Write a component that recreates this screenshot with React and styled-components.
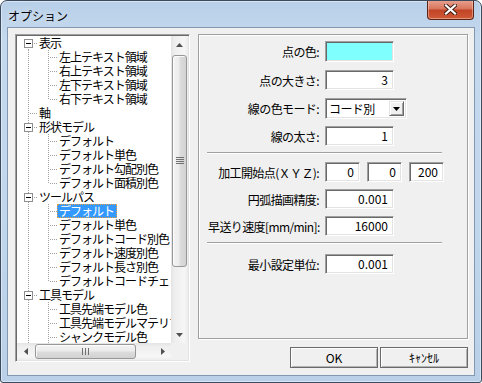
import React from 'react'
import styled, { createGlobalStyle } from 'styled-components'

const FONT = `"Noto Sans CJK JP", "Noto Sans", sans-serif`

const GlobalStyle = createGlobalStyle`
  html, body {
    margin: 0;
    padding: 0;
    background: #ffffff;
  }
  body {
    font-family: ${FONT};
  }
`

const Window = styled.div`
  width: 482px;
  height: 383px;
  box-sizing: border-box;
  border: 1px solid #3b4a5c;
  border-radius: 7px 7px 3px 3px;
  background: linear-gradient(180deg, #b7cfe8 0%, #c5d9ee 10%, #c0d6ec 60%, #b9d0e8 100%);
  box-shadow: inset 0 0 0 1px rgba(255, 255, 255, 0.45);
  display: flex;
  flex-direction: column;
  padding: 0 6px 6px 6px;
  overflow: hidden;
`

const TitleBar = styled.div`
  height: 28px;
  display: flex;
  align-items: center;
  padding-left: 1px;
`

const Title = styled.div`
  font-size: 12px;
  color: #000;
  margin-top: 2px;
  text-shadow: 0 0 6px rgba(255, 255, 255, 0.9);
`

const CloseButton = styled.div`
  align-self: flex-start;
  margin: -1px 1px 0 auto;
  width: 47px;
  height: 20px;
  box-sizing: border-box;
  border: 1px solid #5c2419;
  border-top: none;
  border-radius: 0 0 4px 4px;
  background: linear-gradient(180deg, #e8a493 0%, #d9765e 45%, #c24426 55%, #cf5a36 100%);
  box-shadow: inset 0 0 0 1px rgba(255, 220, 200, 0.45);
  display: flex;
  align-items: center;
  justify-content: center;
`

const Client = styled.div`
  flex: 1;
  border: 1px solid #8398b2;
  background: #f0f0f0;
  display: flex;
  gap: 8px;
  padding: 6px 7px 7px 7px;
`

/* ---------- tree ---------- */

const TreeBox = styled.div`
  width: 175px;
  height: 328px;
  box-sizing: border-box;
  border: 1px solid;
  border-color: #a0a0a0 #ffffff #ffffff #a0a0a0;
  box-shadow: inset 1px 1px #696969, inset -1px -1px #e3e3e3;
  padding: 1px;
  display: grid;
  grid-template-columns: 1fr 17px;
  grid-template-rows: 1fr 17px;
  flex: none;
`

const TreeView = styled.div`
  background: #ffffff;
  overflow: hidden;
`

const TreeRow = styled.div`
  height: 14px;
  display: flex;
  align-items: center;
  white-space: nowrap;
`

const NodeLabel = styled.span`
  display: inline-block;
  font-size: 12px;
  letter-spacing: -1px;
  line-height: 12px;
  padding: 0 2px 0 1px;
  height: 12px;
  border: 1px dotted ${p => (p.$selected ? '#e8a040' : 'transparent')};
  background: ${p => (p.$selected ? '#3399ff' : 'transparent')};
  color: ${p => (p.$selected ? '#ffffff' : '#000000')};
`

const LINE = '#a0a0a0'

const Dotted = props => <line stroke={LINE} strokeDasharray="1 1" {...props} />

const Guide = ({ on }) => (
  <svg width="20" height="14" shapeRendering="crispEdges" style={{ flex: 'none', display: 'block' }}>
    {on && <Dotted x1="11.5" y1="0" x2="11.5" y2="14" />}
  </svg>
)

const Connector = ({ first, last, expandable }) => (
  <svg width="20" height="14" shapeRendering="crispEdges" style={{ flex: 'none', display: 'block' }}>
    <Dotted x1="11.5" y1={first ? 7 : 0} x2="11.5" y2={last ? 8 : 14} />
    <Dotted x1="13" y1="7.5" x2="20" y2="7.5" />
    {expandable && (
      <>
        <rect x="7.5" y="3.5" width="8" height="8" fill="#ffffff" stroke="#8f8f8f" />
        <line x1="9" y1="7.5" x2="14" y2="7.5" stroke="#000000" />
      </>
    )}
  </svg>
)

const ScrollV = styled.div`
  display: flex;
  flex-direction: column;
  background: linear-gradient(90deg, #e4e4e4 0%, #eeeeee 20%, #f6f6f6 80%, #ececec 100%);
`

const ScrollH = styled.div`
  display: flex;
  background: linear-gradient(180deg, #e4e4e4 0%, #eeeeee 20%, #f6f6f6 80%, #ececec 100%);
`

const ArrowCell = styled.div`
  width: 17px;
  height: 17px;
  flex: none;
  display: flex;
  align-items: center;
  justify-content: center;
`

const Track = styled.div`
  flex: 1;
  display: flex;
  flex-direction: ${p => (p.$vertical ? 'column' : 'row')};
`

const Thumb = styled.div`
  box-sizing: border-box;
  border: 1px solid #979797;
  border-radius: 3px;
  display: flex;
  align-items: center;
  justify-content: center;
  ${p =>
    p.$vertical
      ? `
    margin: 2px 1px 0 1px;
    height: 212px;
    background: linear-gradient(90deg, #f3f3f3 0%, #ececec 45%, #dcdcdc 55%, #d2d2d2 100%);
  `
      : `
    margin: 1px 0 1px 1px;
    width: 101px;
    background: linear-gradient(180deg, #f3f3f3 0%, #ececec 45%, #dcdcdc 55%, #d2d2d2 100%);
  `}
  box-shadow: inset 1px 1px rgba(255, 255, 255, 0.8);
`

const Corner = styled.div`
  background: #f0f0f0;
`

const Arrow = ({ dir }) => {
  const pts = {
    up: '0,4 3.5,0 7,4',
    down: '0,0 3.5,4 7,0',
    left: '4,0 0,3.5 4,7',
    right: '0,0 4,3.5 0,7',
  }[dir]
  const vertical = dir === 'up' || dir === 'down'
  return (
    <svg width={vertical ? 7 : 4} height={vertical ? 4 : 7}>
      <polygon points={pts} fill="#505050" />
    </svg>
  )
}

const GripV = () => (
  <svg width="8" height="8" shapeRendering="crispEdges">
    {[0, 2, 4, 6].map(y => (
      <line key={y} x1="0" y1={y + 0.5} x2="8" y2={y + 0.5} stroke="#707070" />
    ))}
  </svg>
)

const GripH = () => (
  <svg width="7" height="7" shapeRendering="crispEdges">
    {[0, 3, 6].map(x => (
      <line key={x} x1={x + 0.5} y1="0" x2={x + 0.5} y2="7" stroke="#707070" />
    ))}
  </svg>
)

const tree = [
  { label: '表示', children: ['左上テキスト領域', '右上テキスト領域', '左下テキスト領域', '右下テキスト領域'] },
  { label: '軸' },
  { label: '形状モデル', children: ['デフォルト', 'デフォルト単色', 'デフォルト勾配別色', 'デフォルト面積別色'] },
  {
    label: 'ツールパス',
    selected: 0,
    children: ['デフォルト', 'デフォルト単色', 'デフォルトコード別色', 'デフォルト速度別色', 'デフォルト長さ別色', 'デフォルトコードチェック別色'],
  },
  { label: '工具モデル', more: true, children: ['工具先端モデル色', '工具先端モデルマテリアル', 'シャンクモデル色', 'シャンクモデルマテリアル'] },
]

function flatten(nodes) {
  const rows = []
  nodes.forEach((n, i) => {
    rows.push({ key: `r${i}`, label: n.label, guides: [], first: i === 0, last: false, expandable: !!n.children })
    ;(n.children || []).forEach((c, j) => {
      rows.push({
        key: `r${i}-${j}`,
        label: c,
        guides: [true],
        first: false,
        last: j === n.children.length - 1 && !n.more,
        selected: n.selected === j,
      })
    })
  })
  return rows
}

const Tree = () => (
  <TreeBox>
    <TreeView>
      {flatten(tree).map(r => (
        <TreeRow key={r.key}>
          {r.guides.map((g, i) => (
            <Guide key={i} on={g} />
          ))}
          <Connector first={r.first} last={r.last} expandable={r.expandable} />
          <NodeLabel $selected={r.selected}>{r.label}</NodeLabel>
        </TreeRow>
      ))}
    </TreeView>
    <ScrollV>
      <ArrowCell><Arrow dir="up" /></ArrowCell>
      <Track $vertical>
        <Thumb $vertical><GripV /></Thumb>
      </Track>
      <ArrowCell><Arrow dir="down" /></ArrowCell>
    </ScrollV>
    <ScrollH>
      <ArrowCell><Arrow dir="left" /></ArrowCell>
      <Track>
        <Thumb><GripH /></Thumb>
      </Track>
      <ArrowCell><Arrow dir="right" /></ArrowCell>
    </ScrollH>
    <Corner />
  </TreeBox>
)

/* ---------- settings panel ---------- */

const RightColumn = styled.div`
  width: 271px;
  display: flex;
  flex-direction: column;
`

const Group = styled.div`
  width: 270px;
  height: 305px;
  box-sizing: border-box;
  border: 1px solid #a0a0a0;
  box-shadow: inset 1px 1px #ffffff, 1px 1px #ffffff;
  padding: 6px 0 0 9px;
  display: flex;
  flex-direction: column;
`

const Row = styled.div`
  display: flex;
  align-items: center;
  gap: 6px;
  margin-top: ${p => p.$top ?? 0}px;
`

const Label = styled.div`
  width: 111px;
  flex: none;
  text-align: right;
  white-space: nowrap;
  font-size: 12px;
  letter-spacing: -0.6px;
  color: #000;
`

const Fields = styled.div`
  display: flex;
  gap: 7px;
`

const Field = styled.div`
  box-sizing: border-box;
  width: ${p => p.$w ?? 69}px;
  height: ${p => p.$h ?? 20}px;
  border: 1px solid;
  border-color: #a0a0a0 #ffffff #ffffff #a0a0a0;
  box-shadow: inset 1px 1px #696969, inset -1px -1px #e3e3e3;
  background: ${p => p.$color ?? '#ffffff'};
  padding: 0 5px;
  font-size: 12px;
  line-height: 18px;
  text-align: right;
  color: #000;
`

const Select = styled(Field)`
  display: flex;
  align-items: center;
  justify-content: space-between;
  padding: 0 2px 0 3px;
  text-align: left;
  letter-spacing: -0.6px;
`

const DropButton = styled.div`
  width: 15px;
  height: 15px;
  box-sizing: border-box;
  border: 1px solid;
  border-color: #e3e3e3 #696969 #696969 #e3e3e3;
  box-shadow: inset 1px 1px #ffffff, inset -1px -1px #a0a0a0;
  background: #f0f0f0;
  display: flex;
  align-items: center;
  justify-content: center;
`

const Separator = styled.div`
  width: 235px;
  height: 1px;
  margin: ${p => p.$before}px 0 ${p => p.$after}px -1px;
  background: #a0a0a0;
  border-bottom: 1px solid #ffffff;
`

const ButtonRow = styled.div`
  display: flex;
  justify-content: flex-end;
  gap: 2px;
  margin-top: 8px;
`

const Button = styled.button`
  width: 88px;
  height: 21px;
  box-sizing: border-box;
  border: 1px solid #6a6a6a;
  box-shadow: inset 1px 1px #ffffff, inset -1px -1px #b4b4b4;
  background: #f0f0f0;
  font-family: ${FONT};
  font-size: 12px;
  color: #000;
  padding: 0;
  line-height: 18px;
`

const Settings = () => (
  <RightColumn>
    <Group>
      <Row>
        <Label>点の色:</Label>
        <Field $color="#80ffff" $h={21} />
      </Row>
      <Row $top={8}>
        <Label>点の大きさ:</Label>
        <Field>3</Field>
      </Row>
      <Row $top={8}>
        <Label>線の色モード:</Label>
        <Select $w={82} $h={21}>
          コード別
          <DropButton>
            <svg width="7" height="4">
              <polygon points="0,0 3.5,4 7,0" fill="#000" />
            </svg>
          </DropButton>
        </Select>
      </Row>
      <Row $top={7}>
        <Label>線の太さ:</Label>
        <Field>1</Field>
      </Row>
      <Separator $before={6} $after={8} />
      <Row>
        <Label>加工開始点(ＸＹＺ):</Label>
        <Fields>
          <Field $w={35}>0</Field>
          <Field $w={35}>0</Field>
          <Field $w={35}>200</Field>
        </Fields>
      </Row>
      <Row $top={7}>
        <Label>円弧描画精度:</Label>
        <Field>0.001</Field>
      </Row>
      <Row $top={7}>
        <Label>早送り速度[mm/min]:</Label>
        <Field>16000</Field>
      </Row>
      <Separator $before={6} $after={10} />
      <Row>
        <Label>最小設定単位:</Label>
        <Field>0.001</Field>
      </Row>
    </Group>
    <ButtonRow>
      <Button>OK</Button>
      <Button>ｷｬﾝｾﾙ</Button>
    </ButtonRow>
  </RightColumn>
)

export default function App() {
  return (
    <>
      <GlobalStyle />
      <Window>
        <TitleBar>
          <Title>オプション</Title>
          <CloseButton>
            <svg width="13" height="11" viewBox="0 0 13 11">
              <path d="M2 1.5 L11 9.5 M11 1.5 L2 9.5" stroke="#3d1a14" strokeWidth="4" strokeLinecap="square" />
              <path d="M2 1.5 L11 9.5 M11 1.5 L2 9.5" stroke="#ffffff" strokeWidth="2.2" strokeLinecap="square" />
            </svg>
          </CloseButton>
        </TitleBar>
        <Client>
          <Tree />
          <Settings />
        </Client>
      </Window>
    </>
  )
}
